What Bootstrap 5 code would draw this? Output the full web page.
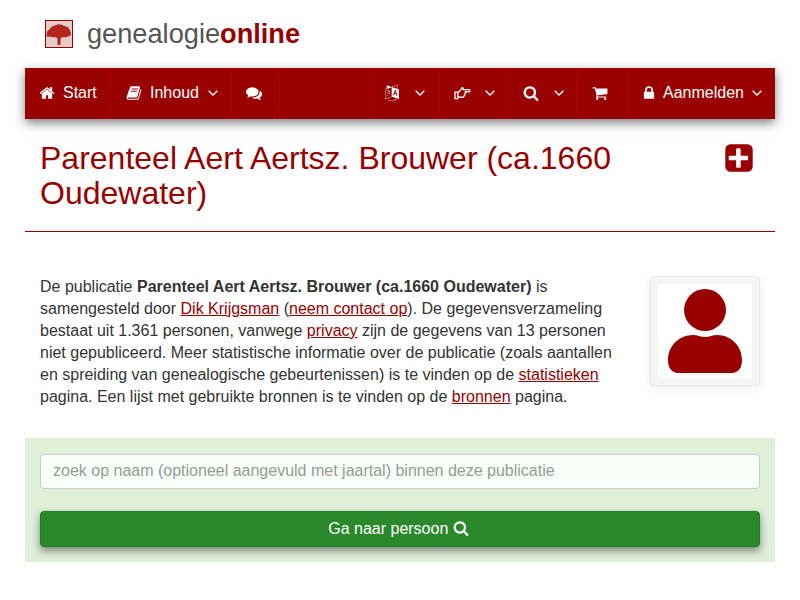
<!DOCTYPE html>
<html lang="nl">
<head>
  <meta charset="UTF-8">
  <meta name="viewport" content="width=device-width, initial-scale=1.0">
  <title>Parenteel Aert Aertsz. Brouwer</title>
  <link href="https://cdn.jsdelivr.net/npm/bootstrap@5.3.2/dist/css/bootstrap.min.css" rel="stylesheet">
  <style>
    body {
      font-family: "Liberation Sans", Arial, sans-serif;
      font-size: 16px;
      line-height: 22px;
      color: #333;
      background: #fff;
    }
    .page-wrap { width: 750px; margin-left: 25px; }
    .logo-bar { height: 68px; padding-left: 20px; }
    .logo-box {
      width: 28px;
      height: 28px;
      border: 1px solid #990000;
      background: #e6cbc7;
      margin-top: -1px;
    }
    .logo-box svg { display: block; }
    .logo-text { font-size: 27.2px; color: #555; margin-left: 14px; line-height: 32px; }
    .logo-text b { color: #990000; }
    .main-nav {
      height: 51px;
      background: #990000;
      box-shadow: 0 4px 10px rgba(0, 0, 0, .5);
    }
    .nav-cell {
      height: 51px;
      padding: 0 0 2px 15px;
      color: #fff;
      border-right: 1px solid #b30000;
      text-decoration: none;
      white-space: nowrap;
    }
    .nav-cell:hover { color: #fff; }
    .nav-cell svg { fill: #fff; flex: none; }
    .nav-label { margin-left: 8px; }
    .nav-caret { margin-left: 9px; fill: none !important; stroke: #fff; stroke-width: 1.3; }
    .cell-start { width: 87px; padding-left: 14px; }
    .cell-inhoud { width: 119px; padding-left: 14px; }
    .cell-chat { width: 49px; }
    .cell-gap { width: 89px; }
    .cell-lang { width: 70px; }
    .cell-hand { width: 69px; }
    .cell-search { width: 70px; }
    .cell-cart { width: 49px; padding-left: 14px; }
    .cell-login { width: 148px; border-right: 0; padding-left: 15px; }
    .cell-login .nav-label { margin-left: 7px; }
    .cell-login .nav-caret { margin-left: 8px; }
    .cell-lang .nav-caret { margin-left: 15px; }
    .cell-hand .nav-caret { margin-left: 14px; }
    .cell-search .nav-caret { margin-left: 15px; }
    .title-row { padding: 22px 15px 0; height: 113px; border-bottom: 1px solid #990000; }
    .title-row h1 {
      width: 620px;
      font-size: 32px;
      line-height: 35px;
      color: #990000;
      font-weight: 400;
      margin: 0;
    }
    .plus-icon { fill: #990000; margin: 1px 5px 0 0; }
    .intro-row { padding: 44px 15px 0; height: 206px; }
    .intro-text { width: 585px; margin: 0; }
    .intro-text a { color: #990000; }
    .person-box {
      width: 110px;
      height: 110px;
      padding: 7px;
      margin-left: 25px;
      background: #f5f5f5;
      border: 1px solid #e8e8e8;
      border-radius: 4px;
      box-shadow: 0 2px 8px rgba(0, 0, 0, .08);
    }
    .person-box div { background: #fff; height: 94px; }
    .person-box svg { display: block; fill: #990000; }
    .search-panel { background: #dff0d8; padding: 16px 15px 15px; height: 124px; }
    .search-panel .form-control {
      height: 35px;
      font-size: 16px;
      padding: 5px 12px 7px;
      background: #f8fff8;
      border-color: #ccc;
      border-radius: 4px;
    }
    .search-panel .form-control::placeholder { color: #999; }
    .go-btn {
      margin-top: 22px;
      height: 36px;
      padding: 0 3px 0 0;
      font-size: 16px;
      color: #fff;
      background: #2b882b;
      border: 1px solid #267a26;
      border-radius: 4px;
      box-shadow: 0 4px 8px rgba(0, 0, 0, .45);
    }
    .go-btn:hover { color: #fff; background: #2b882b; }
    .go-btn svg { fill: #fff; vertical-align: -2px; }
  </style>
</head>
<body>
  <svg width="0" height="0" class="position-absolute">
    <defs>
      <symbol id="ic-search" viewBox="0 0 1792 1792"><path d="M1216 832q0-185-131.500-316.500t-316.500-131.500-316.500 131.500-131.500 316.500 131.500 316.500 316.500 131.500 316.500-131.500 131.500-316.500zm512 832q0 52-38 90t-90 38q-54 0-90-38l-343-342q-179 124-399 124-143 0-273.500-55.500t-225-150-150-225-55.500-273.500 55.500-273.500 150-225 225-150 273.500-55.500 273.500 55.500 225 150 150 225 55.500 273.500q0 220-124 399l343 343q37 37 37 90z"/></symbol>
      <symbol id="ic-caret" viewBox="0 0 10 6"><path d="M.7.7 5 5 9.300.7"/></symbol>
    </defs>
  </svg>

  <div class="page-wrap">
    <!-- logo -->
    <div class="logo-bar d-flex align-items-center">
      <div class="logo-box">
        <svg width="26" height="26" viewBox="0 0 26 26"><path fill="#b3261e" d="M1 14c-1-3 1-5 3-6C5 5 8 5 10 4c3-1.500 6-.5 8 1 3 0 6 2.500 6 5 2 2 1 5.500-2 5.500-1.500 1-4 1-6 .5l-1.500 2V24h-3v-6.500l-2-1.500c-2 .5-4 .5-5-.5-2 .5-4 .5-4.500-1.500z"/></svg>
      </div>
      <div class="logo-text">genealogie<b>online</b></div>
    </div>

    <!-- menu -->
    <nav class="main-nav d-flex">
      <a href="#" class="nav-cell cell-start d-flex align-items-center">
        <svg width="16" height="16" viewBox="0 0 1792 1792"><path d="M1472 992v480q0 26-19 45t-45 19h-384v-384h-256v384h-384q-26 0-45-19t-19-45v-480q0-1 .5-3t.5-3l575-474 575 474q1 2 1 6zm223-69l-62 74q-8 9-21 11h-3q-13 0-21-7l-692-577-692 577q-12 8-24 7-13-2-21-11l-62-74q-8-10-7-23.500t11-21.500l719-599q32-26 76-26t76 26l244 204v-195q0-14 9-23t23-9h192q14 0 23 9t9 23v408l219 182q10 8 11 21.500t-7 23.500z"/></svg>
        <span class="nav-label">Start</span>
      </a>
      <a href="#" class="nav-cell cell-inhoud d-flex align-items-center">
        <svg width="16" height="16" viewBox="0 0 1792 1792"><path d="M1703 478q40 57 18 129l-275 906q-19 64-76.500 107.500t-122.500 43.500h-923q-77 0-148.500-53.500t-99.500-131.500q-24-67-2-127 0-4 3-27t4-37q1-8-3-21.500t-3-19.500q2-11 8-21t16.500-23.500 16.500-23.500q23-38 45-91.500t30-91.500q3-10 .5-30t-.5-28q3-11 17-28t17-23q21-36 42-92t25-90q1-9-2.500-32t.5-28q4-13 22-30.500t22-22.500q19-26 42.500-84.500t27.500-96.500q1-8-3-25.500t-2-26.500q2-8 9-18t18-23 17-21q8-12 16.500-30.500t15-35 16-36 19.500-32 26.500-23.500 36-11.500 47.500 5.500l-1 3q38-9 51-9h761q74 0 114 56t18 130l-274 906q-36 119-71.500 153.500t-128.500 34.500h-869q-27 0-38 15-11 16-1 43 24 70 144 70h923q29 0 56-15.500t35-41.500l300-987q7-22 5-57 38 15 59 43zm-1064 2q-4 13 2 22.500t20 9.500h608q13 0 25.500-9.500t16.500-22.500l21-64q4-13-2-22.500t-20-9.500h-608q-13 0-25.500 9.500t-16.500 22.500zm-83 256q-4 13 2 22.500t20 9.500h608q13 0 25.500-9.500t16.500-22.500l21-64q4-13-2-22.500t-20-9.500h-608q-13 0-25.500 9.500t-16.500 22.500z"/></svg>
        <span class="nav-label">Inhoud</span>
        <svg class="nav-caret" width="10" height="6"><use href="#ic-caret"/></svg>
      </a>
      <a href="#" class="nav-cell cell-chat d-flex align-items-center">
        <svg width="16" height="16" viewBox="0 0 1792 1792"><path d="M1408 768q0 139-94 257t-256.500 186.500-353.500 68.500q-86 0-176-16-124 88-278 128-36 9-86 16h-3q-11 0-20.500-8t-11.500-21q-1-3-1-6.500t.5-6.500 2-6l2.500-5 3.500-5.500 4-5 4.500-5 4-4.500q5-6 23-25t26-29.500 22.500-29 25-38.500 20.500-44q-124-72-195-177t-71-224q0-139 94-257t256.500-186.500 353.500-68.500 353.500 68.500 256.500 186.500 94 257zm384 256q0 120-71 224.500t-195 176.500q10 24 20.500 44t25 38.500 22.500 29 26 29.500 23 25q1 1 4 4.500t4.500 5 4 5 3.500 5.500l2.500 5 2 6 .5 6.500-1 6.500q-3 14-13 22t-22 7q-50-7-86-16-154-40-278-128-90 16-176 16-271 0-472-132 58 4 88 4 161 0 309-45t264-129q125-92 192-212t67-254q0-77-23-152 129 71 204 178t75 230z"/></svg>
      </a>
      <div class="nav-cell cell-gap"></div>
      <a href="#" class="nav-cell cell-lang d-flex align-items-center">
        <svg width="16" height="16" viewBox="0 0 1792 1792"><path d="M782 1078q-1 3-12.500-.5t-31.500-11.500l-20-9q-44-20-87-49-7-5-41-31.500t-38-28.500q-67 103-134 181-81 95-105 110-4 2-19.500 4t-18.500 0q6-4 82-92 21-24 85.500-115t78.500-118q17-30 51-98.500t36-77.500q-8-1-110 33-8 2-27.500 7.500t-34.500 9.500-17 5q-2 2-2 10.500t-1 9.500q-5 10-31 15-23 7-47 0-18-4-28-21-4-6-5-23 6-2 24.500-5t29.500-6q58-16 105-32 100-35 102-35 10-2 43-19.500t44-21.500q9-3 21.500-8t14.500-5.500 6 .5q2 12-1 33 0 2-12.500 27t-26.500 53.500-17 33.500q-25 50-77 131l64 28q12 6 74.500 32t67.500 28q4 1 10.500 25.500t4.500 30.500zm-205-486q3 15-4 28-12 23-50 38-30 12-60 12-26-3-49-26-14-15-18-41l1-3q3 3 19.500 5t26.500 0 58-16q36-12 55-14 17 0 21 17zm698 129l63 227-139-42zm-1108 800l694-232v-1032l-694 233v1031zm1241-317l102 31-181-657-100-31-216 536 102 31 45-110 211 65zm-503-962l573 184v-380zm311 1323l158 13-54 160-40-66q-130 83-276 108-58 12-91 12h-84q-79 0-199.500-39t-183.500-85q-8-7-8-16 0-8 5-13.500t13-5.500q4 0 18 7.500t30.500 16.500 20.500 11q73 37 159.500 61.500t157.500 24.500q95 0 167-14.500t157-50.500q15-7 30.500-15.500t34-19 28.500-16.500zm448-1079v1079l-774-246q-14 6-375 127.500t-368 121.500q-13 0-18-13 0-1-1-3v-1078q3-9 4-10 5-6 20-11 106-35 149-50v-384l558 198q2 0 160.500-55t316-108.500 161.500-53.500q20 0 20 21v418z"/></svg>
        <svg class="nav-caret" width="10" height="6"><use href="#ic-caret"/></svg>
      </a>
      <a href="#" class="nav-cell cell-hand d-flex align-items-center">
        <svg class="hand-icon" width="17" height="14" viewBox="0 0 18 14" stroke="#fff" stroke-width="1.4" stroke-linejoin="round"><path fill="none" d="M1 6h3v7H1zM4 6.500c1.500 0 3-3 4.500-5 1-.5 1.500.5 1 2h6.300c1.400 0 1.400 2.200 0 2.200h-4c.7 1 .3 2-.3 2.300.3 1-.2 1.700-.8 2 0 1-.5 1.500-1.500 1.500H7c-1.300 0-2-.8-3-.8"/></svg>
        <svg class="nav-caret" width="10" height="6"><use href="#ic-caret"/></svg>
      </a>
      <a href="#" class="nav-cell cell-search d-flex align-items-center">
        <svg width="16" height="16"><use href="#ic-search"/></svg>
        <svg class="nav-caret" width="10" height="6"><use href="#ic-caret"/></svg>
      </a>
      <a href="#" class="nav-cell cell-cart d-flex align-items-center">
        <svg width="16" height="16" viewBox="0 0 1792 1792"><path d="M704 1536q0 52-38 90t-90 38-90-38-38-90 38-90 90-38 90 38 38 90zm896 0q0 52-38 90t-90 38-90-38-38-90 38-90 90-38 90 38 38 90zm128-1088v512q0 24-16.500 42.500t-40.500 21.500l-1044 122q13 60 13 70 0 16-24 64h920q26 0 45 19t19 45-19 45-45 19h-1024q-26 0-45-19t-19-45q0-11 8-31.500t16-36 21.500-40 15.500-29.500l-177-823h-204q-26 0-45-19t-19-45 19-45 45-19h256q16 0 28.500 6.500t19.500 15.500 13 24.500 8 26 5.500 29.500 4.500 26h1201q26 0 45 19t19 45z"/></svg>
      </a>
      <a href="#" class="nav-cell cell-login d-flex align-items-center">
        <svg width="14" height="16" viewBox="128 0 1536 1792"><path d="M640 768h512v-192q0-106-75-181t-181-75-181 75-75 181v192zm832 96v576q0 40-28 68t-68 28h-960q-40 0-68-28t-28-68v-576q0-40 28-68t68-28h32v-192q0-184 132-316t316-132 316 132 132 316v192h32q40 0 68 28t28 68z"/></svg>
        <span class="nav-label">Aanmelden</span>
        <svg class="nav-caret" width="10" height="6"><use href="#ic-caret"/></svg>
      </a>
    </nav>

    <!-- titel -->
    <div class="title-row d-flex justify-content-between">
      <h1>Parenteel Aert Aertsz. Brouwer (ca.1660 Oudewater)</h1>
      <svg class="plus-icon" width="32" height="32" viewBox="0 0 1792 1792"><path d="M1408 960v-128q0-26-19-45t-45-19h-352v-352q0-26-19-45t-45-19h-128q-26 0-45 19t-19 45v352h-352q-26 0-45 19t-19 45v128q0 26 19 45t45 19h352v352q0 26 19 45t45 19h128q26 0 45-19t19-45v-352h352q26 0 45-19t19-45zm256-544v960q0 119-84.500 203.500t-203.500 84.500h-960q-119 0-203.500-84.500t-84.500-203.500v-960q0-119 84.500-203.500t203.500-84.500h960q119 0 203.500 84.500t84.500 203.500z"/></svg>
    </div>

    <!-- introductie -->
    <div class="intro-row d-flex align-items-start">
      <p class="intro-text">De publicatie <b>Parenteel Aert Aertsz. Brouwer (ca.1660 Oudewater)</b> is samengesteld door <a href="#">Dik Krijgsman</a> (<a href="#">neem contact op</a>). De gegevensverzameling bestaat uit 1.361 personen, vanwege <a href="#">privacy</a> zijn de gegevens van 13 personen niet gepubliceerd. Meer statistische informatie over de publicatie (zoals aantallen en spreiding van genealogische gebeurtenissen) is te vinden op de <a href="#">statistieken</a> pagina. Een lijst met gebruikte bronnen is te vinden op de <a href="#">bronnen</a> pagina.</p>
      <div class="person-box">
        <div>
          <svg width="94" height="94" viewBox="0 0 94 94"><circle cx="47" cy="26" r="21"/><path d="M10 76c0-14 11-25 25-25 4 0 8 2 12 2s8-2 12-2c14 0 25 11 25 25 0 8-4 13-10 13H20c-6 0-10-5-10-13z"/></svg>
        </div>
      </div>
    </div>

    <!-- zoeken -->
    <form class="search-panel">
      <input type="text" class="form-control" placeholder="zoek op naam (optioneel aangevuld met jaartal) binnen deze publicatie">
      <button type="button" class="btn go-btn w-100">Ga naar persoon <svg width="16" height="16"><use href="#ic-search"/></svg></button>
    </form>
  </div>

  <script src="https://cdn.jsdelivr.net/npm/bootstrap@5.3.2/dist/js/bootstrap.bundle.min.js"></script>
</body>
</html>
